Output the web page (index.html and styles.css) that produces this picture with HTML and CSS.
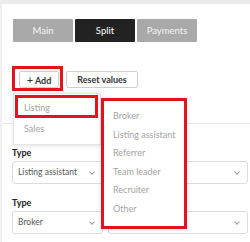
FILE: index.html
```html
<!DOCTYPE html>
<html lang="en">
<head>
    <meta charset="UTF-8">
    <meta name="viewport" content="width=device-width, initial-scale=1.0">
    <title>Split</title>
    <link rel="stylesheet" href="styles.css">
</head>
<body>
    <div class="topbar"></div>
    <div class="panel">
        <div class="tabs">
            <div class="tab">Main</div>
            <div class="tab active">Split</div>
            <div class="tab">Payments</div>
        </div>
        <div class="toolbar">
            <button class="btn add"><span class="plus">+</span> Add</button>
            <button class="btn reset">Reset values</button>
        </div>
        <div class="rule"></div>
        <div class="form">
            <div class="field">
                <label>Type</label>
                <div class="select">Listing assistant <span class="chev"></span></div>
            </div>
            <div class="field">
                <label></label>
                <div class="select"><span class="chev"></span></div>
            </div>
            <div class="field">
                <label>Type</label>
                <div class="select">Broker <span class="chev"></span></div>
            </div>
            <div class="field">
                <label></label>
                <div class="select"><span class="chev"></span></div>
            </div>
        </div>
    </div>

    <div class="menu add-menu">
        <div class="item">Listing</div>
        <div class="item">Sales</div>
    </div>
    <div class="menu type-menu">
        <div class="item">Broker</div>
        <div class="item">Listing assistant</div>
        <div class="item">Referrer</div>
        <div class="item">Team leader</div>
        <div class="item">Recruiter</div>
        <div class="item">Other</div>
    </div>

    <div class="mark mark-add"></div>
    <div class="mark mark-listing"></div>
    <div class="mark mark-menu"></div>
</body>
</html>
```

FILE: styles.css
```css
body {
    margin: 0;
    font-family: Lato, 'Open Sans', sans-serif;
    background-color: #ffffff;
    color: #333;
    overflow: hidden;
}
.topbar {
    height: 4px;
    background-color: #ececec;
}
.panel {
    border-left: 2px solid #f0f0f0;
    height: 238px;
    padding: 15px 0 0 11px;
    box-sizing: border-box;
}
.tabs {
    display: flex;
    gap: 2px;
}
.tab {
    width: 60px;
    height: 23px;
    line-height: 23px;
    text-align: center;
    font-size: 9.5px;
    color: #f4f4f4;
    background-color: #a9a9a9;
    border-radius: 1px;
}
.tab.active {
    background-color: #222222;
    color: #ffffff;
}
.toolbar {
    display: flex;
    gap: 7px;
    margin-top: 29px;
    padding-left: 6px;
}
.btn {
    height: 17px;
    padding: 0;
    border: 1px solid #cfcfcf;
    border-radius: 2px;
    background-color: #ffffff;
    font-family: inherit;
    font-size: 9px;
    font-weight: bold;
    color: #333;
}
.btn .plus {
    font-size: 11px;
    font-weight: normal;
    line-height: 1;
}
.btn.add {
    width: 40px;
}
.btn.reset {
    width: 72px;
}
.rule {
    margin: 35px 0 0 -11px;
    border-top: 1px solid #e6e6e6;
}
.form {
    display: grid;
    grid-template-columns: 91px 140px;
    column-gap: 5px;
    row-gap: 13px;
    margin: 23px 0 0 -1px;
}
.field label {
    display: block;
    height: 12px;
    line-height: 12px;
    margin-bottom: 2px;
    font-size: 9px;
    font-weight: bold;
    color: #222;
}
.select {
    position: relative;
    height: 23px;
    line-height: 21px;
    border: 1px solid #dcdcdc;
    border-radius: 3px;
    box-sizing: border-box;
    padding-left: 5px;
    font-size: 8.5px;
    color: #555;
}
.chev {
    position: absolute;
    right: 8px;
    top: 8px;
    width: 3px;
    height: 3px;
    border-right: 1px solid #999;
    border-bottom: 1px solid #999;
    transform: rotate(45deg);
}
.menu {
    position: absolute;
    background-color: #ffffff;
    border: 1px solid #e6e6e6;
    box-shadow: 0 1px 4px rgba(0,0,0,0.12);
    box-sizing: border-box;
    font-size: 9px;
    color: #a3a3a3;
}
.add-menu {
    left: 13px;
    top: 93px;
    width: 88px;
    height: 52px;
    padding: 3px 0 0 10px;
}
.add-menu .item {
    height: 21px;
    line-height: 21px;
}
.type-menu {
    left: 101px;
    top: 98px;
    width: 86px;
    height: 131px;
    padding: 8px 0 0 11px;
}
.type-menu .item {
    height: 18.6px;
    line-height: 18.6px;
}
.mark {
    position: absolute;
    border: 3px solid #e3131c;
    box-sizing: border-box;
}
.mark-add {
    left: 12px;
    top: 66px;
    width: 51px;
    height: 25px;
}
.mark-listing {
    left: 15px;
    top: 95px;
    width: 83px;
    height: 23px;
}
.mark-menu {
    left: 101px;
    top: 98px;
    width: 86px;
    height: 131px;
}
```
